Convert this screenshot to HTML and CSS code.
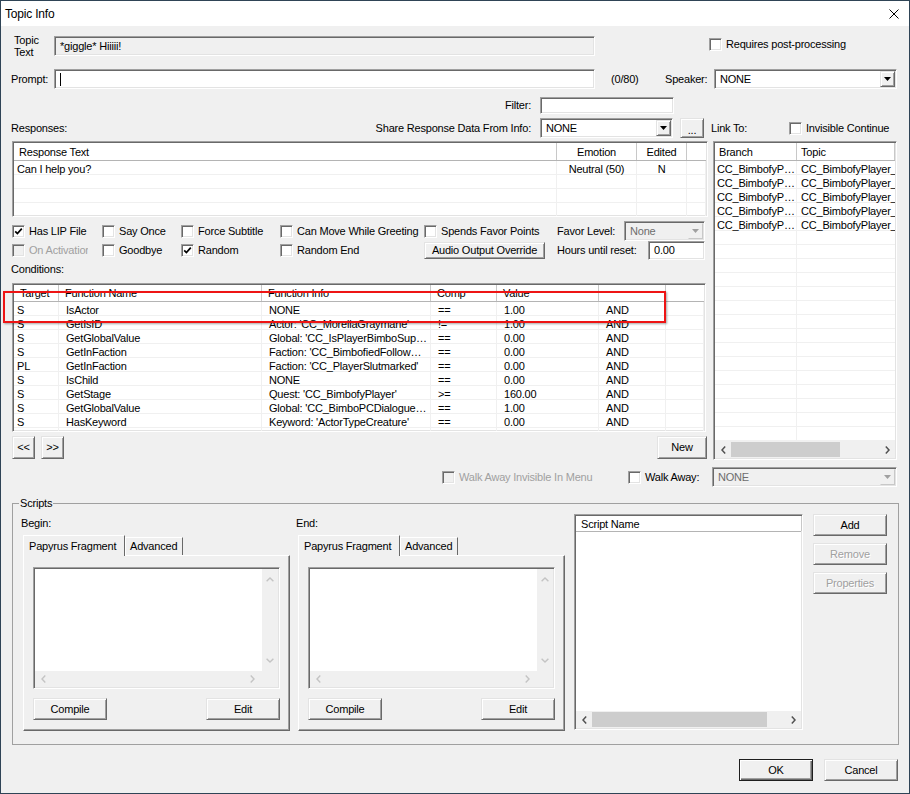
FILE: index.html
```html
<!DOCTYPE html>
<html lang="en">
<head>
    <meta charset="UTF-8">
    <meta name="viewport" content="width=device-width, initial-scale=1.0">
    <title>Topic Info</title>
    <link rel="stylesheet" href="styles.css">
</head>
<body>

<div class="window">
    <div class="titlebar">
        <span>Topic Info</span>
        <svg class="close" width="10" height="10" viewBox="0 0 10 10"><path d="M0.5 0.5L9.5 9.5M9.5 0.5L0.5 9.5" stroke="#000" stroke-width="1"/></svg>
    </div>

    <div class="dialog">
        <div class="row topic-row">
            <span class="lbl-topic">Topic<br>Text</span>
            <div class="field sunken disabled wide">*giggle* Hiiiii!</div>
            <span class="cb post"><span class="box"></span>Requires post-processing</span>
        </div>

        <div class="row prompt-row">
            <span class="lbl-prompt">Prompt:</span>
            <div class="field sunken wide"><span class="caret"></span></div>
            <span class="count">(0/80)</span>
            <span class="lbl-speaker">Speaker:</span>
            <div class="combo sunken speaker"><span class="combo-text">NONE</span><span class="drop"><i class="tri"></i></span></div>
        </div>

        <div class="main">
            <div class="left">
                <div class="row filter-row">
                    <span class="lbl-filter">Filter:</span>
                    <div class="field sunken filter"></div>
                </div>

                <div class="row resp-row">
                    <span class="lbl-resp">Responses:</span>
                    <span class="lbl-share">Share Response Data From Info:</span>
                    <div class="combo sunken share"><span class="combo-text">NONE</span><span class="drop"><i class="tri"></i></span></div>
                    <button class="btn dots">...</button>
                </div>

                <div class="list sunken responses">
                    <div class="lv-head">
                        <span class="c r1">Response Text</span>
                        <span class="c r2 center">Emotion</span>
                        <span class="c r3 center">Edited</span>
                        <span class="c fill"></span>
                    </div>
                    <div class="lv-row">
                        <span class="c r1">Can I help you?</span>
                        <span class="c r2 center">Neutral (50)</span>
                        <span class="c r3 center">N</span>
                        <span class="c fill"></span>
                    </div>
                    <div class="lv-row"><span class="c r1"></span><span class="c r2"></span><span class="c r3"></span><span class="c fill"></span></div>
                    <div class="lv-row"><span class="c r1"></span><span class="c r2"></span><span class="c r3"></span><span class="c fill"></span></div>
                    <div class="lv-row"><span class="c r1"></span><span class="c r2"></span><span class="c r3"></span><span class="c fill"></span></div>
                </div>

                <div class="opts">
                    <span class="cb"><span class="box"><svg width="9" height="9" viewBox="0 0 9 9"><path d="M1.2 4.3L3.4 6.6L7.8 1.6" fill="none" stroke="#000" stroke-width="1.7"/></svg></span>Has LIP File</span>
                    <span class="cb"><span class="box"></span>Say Once</span>
                    <span class="cb"><span class="box"></span>Force Subtitle</span>
                    <span class="cb"><span class="box"></span>Can Move While Greeting</span>
                    <span class="cb"><span class="box"></span>Spends Favor Points</span>
                    <div class="opt-end">
                        <span>Favor Level:</span>
                        <div class="combo sunken disabled favor"><span class="combo-text">None</span><span class="drop"><i class="tri"></i></span></div>
                    </div>

                    <span class="cb off"><span class="box"></span><span class="clip">On Activation</span></span>
                    <span class="cb"><span class="box"></span>Goodbye</span>
                    <span class="cb"><span class="box"><svg width="9" height="9" viewBox="0 0 9 9"><path d="M1.2 4.3L3.4 6.6L7.8 1.6" fill="none" stroke="#000" stroke-width="1.7"/></svg></span>Random</span>
                    <span class="cb"><span class="box"></span>Random End</span>
                    <button class="btn audio">Audio Output Override</button>
                    <div class="opt-end">
                        <span>Hours until reset:</span>
                        <div class="field sunken hours">0.00</div>
                    </div>
                </div>

                <div class="lbl-cond">Conditions:</div>

                <div class="list sunken conditions">
                    <div class="lv-head">
                        <span class="c k1">Target</span>
                        <span class="c k2">Function Name</span>
                        <span class="c k3">Function Info</span>
                        <span class="c k4">Comp</span>
                        <span class="c k5">Value</span>
                        <span class="c k6"></span>
                        <span class="c fill"></span>
                    </div>
                    <div class="lv-row"><span class="c k1">S</span><span class="c k2">IsActor</span><span class="c k3">NONE</span><span class="c k4">==</span><span class="c k5">1.00</span><span class="c k6">AND</span><span class="c fill"></span></div>
                    <div class="lv-row"><span class="c k1">S</span><span class="c k2">GetIsID</span><span class="c k3">Actor: 'CC_MorellaGraymane'</span><span class="c k4">!=</span><span class="c k5">1.00</span><span class="c k6">AND</span><span class="c fill"></span></div>
                    <div class="lv-row"><span class="c k1">S</span><span class="c k2">GetGlobalValue</span><span class="c k3">Global: 'CC_IsPlayerBimboSup…</span><span class="c k4">==</span><span class="c k5">0.00</span><span class="c k6">AND</span><span class="c fill"></span></div>
                    <div class="lv-row"><span class="c k1">S</span><span class="c k2">GetInFaction</span><span class="c k3">Faction: 'CC_BimbofiedFollow…</span><span class="c k4">==</span><span class="c k5">0.00</span><span class="c k6">AND</span><span class="c fill"></span></div>
                    <div class="lv-row"><span class="c k1">PL</span><span class="c k2">GetInFaction</span><span class="c k3">Faction: 'CC_PlayerSlutmarked'</span><span class="c k4">==</span><span class="c k5">0.00</span><span class="c k6">AND</span><span class="c fill"></span></div>
                    <div class="lv-row"><span class="c k1">S</span><span class="c k2">IsChild</span><span class="c k3">NONE</span><span class="c k4">==</span><span class="c k5">0.00</span><span class="c k6">AND</span><span class="c fill"></span></div>
                    <div class="lv-row"><span class="c k1">S</span><span class="c k2">GetStage</span><span class="c k3">Quest: 'CC_BimbofyPlayer'</span><span class="c k4">&gt;=</span><span class="c k5">160.00</span><span class="c k6">AND</span><span class="c fill"></span></div>
                    <div class="lv-row"><span class="c k1">S</span><span class="c k2">GetGlobalValue</span><span class="c k3">Global: 'CC_BimboPCDialogue…</span><span class="c k4">==</span><span class="c k5">1.00</span><span class="c k6">AND</span><span class="c fill"></span></div>
                    <div class="lv-row"><span class="c k1">S</span><span class="c k2">HasKeyword</span><span class="c k3">Keyword: 'ActorTypeCreature'</span><span class="c k4">==</span><span class="c k5">0.00</span><span class="c k6">AND</span><span class="c fill"></span></div>
                    <div class="lv-row"><span class="c k1"></span><span class="c k2"></span><span class="c k3"></span><span class="c k4"></span><span class="c k5"></span><span class="c k6"></span><span class="c fill"></span></div>
                </div>

                <div class="row nav-row">
                    <button class="btn nav">&lt;&lt;</button>
                    <button class="btn nav">&gt;&gt;</button>
                    <button class="btn new">New</button>
                </div>

                <div class="row walk-row">
                    <span class="cb off walk-menu"><span class="box"></span>Walk Away Invisible In Menu</span>
                    <span class="cb"><span class="box"></span>Walk Away:</span>
                </div>
            </div>

            <div class="right">
                <div class="row link-row">
                    <span class="lbl-link">Link To:</span>
                    <span class="cb"><span class="box"></span>Invisible Continue</span>
                </div>

                <div class="list sunken links">
                    <div class="lv-head">
                        <span class="c l1">Branch</span>
                        <span class="c l2">Topic</span>
                    </div>
                    <div class="lv-body">
                        <div class="lv-row"><span class="c l1">CC_BimbofyP…</span><span class="c l2">CC_BimbofyPlayer_Greet</span></div>
                        <div class="lv-row"><span class="c l1">CC_BimbofyP…</span><span class="c l2">CC_BimbofyPlayer_Greet</span></div>
                        <div class="lv-row"><span class="c l1">CC_BimbofyP…</span><span class="c l2">CC_BimbofyPlayer_Greet</span></div>
                        <div class="lv-row"><span class="c l1">CC_BimbofyP…</span><span class="c l2">CC_BimbofyPlayer_Intro</span></div>
                        <div class="lv-row"><span class="c l1">CC_BimbofyP…</span><span class="c l2">CC_BimbofyPlayer_Intro</span></div>
                        <div class="lv-row"><span class="c l1"></span><span class="c l2"></span></div>
                        <div class="lv-row"><span class="c l1"></span><span class="c l2"></span></div>
                        <div class="lv-row"><span class="c l1"></span><span class="c l2"></span></div>
                        <div class="lv-row"><span class="c l1"></span><span class="c l2"></span></div>
                        <div class="lv-row"><span class="c l1"></span><span class="c l2"></span></div>
                        <div class="lv-row"><span class="c l1"></span><span class="c l2"></span></div>
                        <div class="lv-row"><span class="c l1"></span><span class="c l2"></span></div>
                        <div class="lv-row"><span class="c l1"></span><span class="c l2"></span></div>
                        <div class="lv-row"><span class="c l1"></span><span class="c l2"></span></div>
                        <div class="lv-row"><span class="c l1"></span><span class="c l2"></span></div>
                        <div class="lv-row"><span class="c l1"></span><span class="c l2"></span></div>
                        <div class="lv-row"><span class="c l1"></span><span class="c l2"></span></div>
                        <div class="lv-row"><span class="c l1"></span><span class="c l2"></span></div>
                        <div class="lv-row"><span class="c l1"></span><span class="c l2"></span></div>
                        <div class="lv-row"><span class="c l1"></span><span class="c l2"></span></div>
                    </div>
                    <div class="hbar">
                        <span class="arrow"><svg width="5" height="8" viewBox="0 0 5 8"><path d="M4.2 0.6L1 4L4.2 7.4" fill="none" stroke="#505050" stroke-width="1.5"/></svg></span>
                        <span class="thumb link-thumb"></span>
                        <span class="track"></span>
                        <span class="arrow"><svg width="5" height="8" viewBox="0 0 5 8"><path d="M0.8 0.6L4 4L0.8 7.4" fill="none" stroke="#505050" stroke-width="1.5"/></svg></span>
                    </div>
                </div>

                <div class="combo sunken disabled walk-combo"><span class="combo-text">NONE</span><span class="drop"><i class="tri"></i></span></div>
            </div>
        </div>

        <fieldset class="scripts">
            <legend>Scripts</legend>
            <div class="scripts-body">
                <div class="frag">
                    <div class="frag-lbl">Begin:</div>
                    <div class="tabs"><span class="tab active">Papyrus Fragment</span><span class="tab">Advanced</span></div>
                    <div class="tab-panel">
                        <div class="edit sunken">
                            <div class="edit-area"></div>
                            <div class="vscroll">
                                <svg width="8" height="5" viewBox="0 0 8 5"><path d="M0.6 4.3L4 1L7.4 4.3" fill="none" stroke="#c4c4c4" stroke-width="1.4"/></svg>
                                <svg width="8" height="5" viewBox="0 0 8 5"><path d="M0.6 0.7L4 4L7.4 0.7" fill="none" stroke="#c4c4c4" stroke-width="1.4"/></svg>
                            </div>
                            <div class="hscroll">
                                <svg width="5" height="8" viewBox="0 0 5 8"><path d="M4.3 0.6L1 4L4.3 7.4" fill="none" stroke="#c4c4c4" stroke-width="1.4"/></svg>
                                <svg width="5" height="8" viewBox="0 0 5 8"><path d="M0.7 0.6L4 4L0.7 7.4" fill="none" stroke="#c4c4c4" stroke-width="1.4"/></svg>
                            </div>
                            <div class="corner"></div>
                        </div>
                        <div class="panel-btns"><button class="btn wide-btn">Compile</button><button class="btn wide-btn">Edit</button></div>
                    </div>
                </div>

                <div class="frag end">
                    <div class="frag-lbl">End:</div>
                    <div class="tabs"><span class="tab active">Papyrus Fragment</span><span class="tab">Advanced</span></div>
                    <div class="tab-panel">
                        <div class="edit sunken">
                            <div class="edit-area"></div>
                            <div class="vscroll">
                                <svg width="8" height="5" viewBox="0 0 8 5"><path d="M0.6 4.3L4 1L7.4 4.3" fill="none" stroke="#c4c4c4" stroke-width="1.4"/></svg>
                                <svg width="8" height="5" viewBox="0 0 8 5"><path d="M0.6 0.7L4 4L7.4 0.7" fill="none" stroke="#c4c4c4" stroke-width="1.4"/></svg>
                            </div>
                            <div class="hscroll">
                                <svg width="5" height="8" viewBox="0 0 5 8"><path d="M4.3 0.6L1 4L4.3 7.4" fill="none" stroke="#c4c4c4" stroke-width="1.4"/></svg>
                                <svg width="5" height="8" viewBox="0 0 5 8"><path d="M0.7 0.6L4 4L0.7 7.4" fill="none" stroke="#c4c4c4" stroke-width="1.4"/></svg>
                            </div>
                            <div class="corner"></div>
                        </div>
                        <div class="panel-btns"><button class="btn wide-btn">Compile</button><button class="btn wide-btn">Edit</button></div>
                    </div>
                </div>

                <div class="list sunken script-list">
                    <div class="lv-head script-head"><span class="c s1">Script Name</span></div>
                    <div class="lv-body"></div>
                    <div class="hbar">
                        <span class="arrow"><svg width="5" height="8" viewBox="0 0 5 8"><path d="M4.2 0.6L1 4L4.2 7.4" fill="none" stroke="#505050" stroke-width="1.5"/></svg></span>
                        <span class="thumb script-thumb"></span>
                        <span class="track"></span>
                        <span class="arrow"><svg width="5" height="8" viewBox="0 0 5 8"><path d="M0.8 0.6L4 4L0.8 7.4" fill="none" stroke="#505050" stroke-width="1.5"/></svg></span>
                    </div>
                </div>

                <div class="side-btns">
                    <button class="btn wide-btn">Add</button>
                    <button class="btn wide-btn off">Remove</button>
                    <button class="btn wide-btn off">Properties</button>
                </div>
            </div>
        </fieldset>

        <div class="footer">
            <button class="btn wide-btn default">OK</button>
            <button class="btn wide-btn">Cancel</button>
        </div>

        <div class="annot"></div>
    </div>
</div>

</body>
</html>
```

FILE: styles.css
```css
* {
    box-sizing: border-box;
}
body {
    margin: 0;
    background: #fff;
    font-family: "Liberation Sans", Arial, sans-serif;
    font-size: 11px;
    letter-spacing: -0.2px;
    color: #000;
}
.window {
    width: 910px;
    height: 794px;
    border: 1px solid #2f4456;
    background: #f0f0f0;
    overflow: hidden;
}
.titlebar {
    height: 25px;
    background: #fff;
    display: flex;
    align-items: center;
    justify-content: space-between;
    padding: 0 10px 0 4px;
    font-size: 12px;
}
.dialog {
    position: relative;
    padding-top: 7px;
    line-height: 13px;
}
.row {
    display: flex;
    align-items: center;
    white-space: nowrap;
}

/* 3d borders */
.sunken {
    border: 1px solid;
    border-color: #a0a0a0 #fff #fff #a0a0a0;
    box-shadow: inset 1px 1px #696969, inset -1px -1px #e3e3e3;
}
.btn {
    font: inherit;
    letter-spacing: inherit;
    color: #000;
    padding: 0;
    background: #f0f0f0;
    border: 1px solid;
    border-color: #e3e3e3 #696969 #696969 #e3e3e3;
    box-shadow: inset 1px 1px #fff, inset -1px -1px #a0a0a0;
    display: flex;
    align-items: center;
    justify-content: center;
}
.btn.off {
    color: #a0a0a0;
    text-shadow: 1px 1px #fff;
}
.btn.default {
    border-color: #1e1e1e;
    box-shadow: inset 1px 1px #fff, inset -1px -1px #696969, inset -2px -2px #a0a0a0;
}
.wide-btn {
    width: 74px;
    height: 22px;
}

/* inputs */
.field {
    height: 20px;
    padding: 0 5px;
    background: #fff;
    display: flex;
    align-items: center;
    white-space: nowrap;
    overflow: hidden;
}
.field.disabled {
    background: #f0f0f0;
}
.wide {
    width: 541px;
}
.caret {
    width: 1px;
    height: 13px;
    background: #000;
}
.combo {
    height: 20px;
    padding: 1px;
    background: #fff;
    display: flex;
}
.combo-text {
    flex: 1;
    padding-left: 4px;
    display: flex;
    align-items: center;
}
.drop {
    width: 15px;
    background: #f0f0f0;
    border: 1px solid;
    border-color: #e3e3e3 #696969 #696969 #e3e3e3;
    box-shadow: inset 1px 1px #fff, inset -1px -1px #a0a0a0;
    display: flex;
    align-items: center;
    justify-content: center;
}
.tri {
    width: 7px;
    height: 4px;
    background: #000;
    clip-path: polygon(0 0, 100% 0, 50% 100%);
}
.combo.disabled {
    background: #f0f0f0;
    color: #6d6d6d;
}
.combo.disabled .drop {
    border-color: #f0f0f0 #c8c8c8 #c8c8c8 #f0f0f0;
    box-shadow: none;
}
.combo.disabled .tri {
    background: #a0a0a0;
}

/* checkboxes */
.cb {
    display: flex;
    align-items: center;
    gap: 4px;
    white-space: nowrap;
}
.box {
    flex: none;
    width: 13px;
    height: 13px;
    background: #fff;
    border: 1px solid;
    border-color: #a0a0a0 #fff #fff #a0a0a0;
    box-shadow: inset 1px 1px #696969, inset -1px -1px #e3e3e3;
    display: flex;
    align-items: center;
    justify-content: center;
}
.cb.off {
    color: #a0a0a0;
}
.cb.off .box {
    background: #f0f0f0;
}
.clip {
    width: 59px;
    overflow: hidden;
}

/* top rows */
.topic-row {
    height: 26px;
}
.lbl-topic {
    margin-left: 13px;
    width: 40px;
    line-height: 12px;
}
.post {
    margin-left: 114px;
    align-self: flex-start;
    margin-top: 5px;
}
.prompt-row {
    height: 20px;
    margin-top: 10px;
}
.lbl-prompt {
    margin-left: 10px;
    width: 43px;
}
.count {
    margin-left: 16px;
    width: 54px;
}
.lbl-speaker {
    width: 49px;
}
.speaker {
    width: 183px;
}

/* main area */
.main {
    display: flex;
    margin-top: 8px;
}
.left {
    width: 709px;
    padding-left: 10px;
}
.right {
    width: 187px;
    padding-top: 21px;
}
.filter-row {
    height: 17px;
}
.lbl-filter {
    width: 520px;
    margin-right: 9px;
    text-align: right;
}
.filter {
    width: 134px;
    height: 17px;
}
.resp-row {
    height: 20px;
    margin-top: 4px;
}
.lbl-resp {
    width: 340px;
}
.lbl-share {
    width: 180px;
    margin-right: 9px;
    text-align: right;
}
.share {
    width: 133px;
}
.dots {
    width: 24px;
    height: 20px;
    margin-left: 7px;
    padding-top: 4px;
}

/* list views */
.list {
    background: #fff;
    padding: 1px;
    overflow: hidden;
    display: flex;
    flex-direction: column;
}
.lv-head {
    flex: none;
    display: flex;
    height: 18px;
    border-bottom: 1px solid #b4b4b4;
}
.lv-head .c {
    border-right: 1px solid #c8c8c8;
    padding-left: 6px;
    padding-top: 1px;
    line-height: 16px;
}
.lv-row {
    flex: none;
    display: flex;
    height: 14px;
    background: linear-gradient(#f0f0f0, #f0f0f0) left bottom / 100% 1px no-repeat;
}
.lv-row .c {
    height: 14px;
    padding-top: 2px;
    line-height: 12px;
    border-right: 1px solid #f0f0f0;
}
.c {
    flex: none;
    display: block;
    padding-left: 7px;
    white-space: nowrap;
    overflow: hidden;
    text-overflow: ellipsis;
}
.c.center {
    text-align: center;
    padding-left: 0;
}
.c.fill {
    flex: 1;
}
.lv-head .c.fill {
    border-right: none;
}
.lv-body {
    flex: 1;
    overflow: hidden;
}

.responses {
    margin-top: 3px;
    margin-left: 1px;
    width: 696px;
    height: 76px;
}
.responses .lv-head .r1 {
    padding-left: 5px;
}
.responses .lv-row .r1 {
    padding-left: 3px;
}
.r1 { width: 543px; }
.r2 { width: 80px; }
.r3 { width: 50px; }

.conditions {
    margin-top: 7px;
    margin-left: 1px;
    width: 694px;
    height: 149px;
}
.conditions .lv-head {
    height: 17px;
}
.conditions .lv-head .c {
    line-height: 15px;
}
.k1 { width: 45px; }
.k2 { width: 203px; }
.k3 { width: 169px; }
.k4 { width: 66px; }
.k5 { width: 102px; }
.k6 { width: 67px; }
.conditions .lv-row .k1 {
    padding-left: 3px;
}

.links {
    margin-top: 3px;
    margin-left: 3px;
    width: 184px;
    height: 319px;
}
.l1 { width: 82px; }
.l2 {
    flex: 1;
    text-overflow: clip;
}
.links .lv-head .c {
    padding-left: 4px;
}
.links .lv-row .l1 {
    padding-left: 2px;
}
.links .lv-row .l2 {
    padding-left: 4px;
    border-right: none;
}

.hbar {
    flex: none;
    height: 17px;
    background: #f0f0f0;
    display: flex;
    align-items: center;
}
.arrow {
    width: 16px;
    display: flex;
    justify-content: center;
}
.thumb {
    height: 15px;
    background: #cdcdcd;
}
.track {
    flex: 1;
}
.link-thumb {
    width: 109px;
}
.script-thumb {
    width: 175px;
}

/* option grid */
.opts {
    display: grid;
    grid-template-columns: 90px 79px 99px 144px 131px 1fr;
    grid-template-rows: 20px 19px;
    align-items: center;
    width: 694px;
    margin-top: 4px;
    margin-left: 1px;
}
.opt-end {
    display: flex;
    align-items: center;
    justify-content: space-between;
    padding-left: 2px;
    padding-right: 1px;
    white-space: nowrap;
}
.favor {
    width: 81px;
}
.hours {
    width: 57px;
    height: 19px;
}
.audio {
    width: 121px;
    height: 17px;
}
.lbl-cond {
    margin-top: 2px;
    height: 14px;
    line-height: 14px;
}

.nav-row {
    margin-top: 4px;
    margin-left: 1px;
    width: 695px;
    height: 23px;
}
.nav {
    width: 23px;
    height: 23px;
    margin-right: 6px;
}
.new {
    width: 50px;
    height: 23px;
    margin-left: auto;
}
.walk-row {
    margin-top: 8px;
    height: 20px;
}
.walk-menu {
    margin-left: 431px;
    width: 186px;
}

.link-row {
    height: 20px;
}
.lbl-link {
    margin-left: 1px;
    width: 78px;
}
.walk-combo {
    margin-top: 7px;
    margin-left: 2px;
    width: 185px;
}

/* scripts group */
.scripts {
    margin: 10px 0 0 11px;
    padding: 0;
    width: 887px;
    height: 248px;
    border: 1px solid #a0a0a0;
    min-inline-size: 0;
}
.scripts legend {
    margin-left: 6px;
    padding: 0 1px;
    line-height: 13px;
}
.scripts-body {
    display: flex;
    align-items: flex-start;
    margin-top: 4px;
    padding-left: 8px;
}
.frag {
    width: 269px;
    padding-top: 2px;
}
.frag.end {
    margin-left: 6px;
}
.frag-lbl {
    line-height: 14px;
}
.tabs {
    display: flex;
    align-items: flex-end;
    height: 20px;
    margin-top: 5px;
    margin-left: 2px;
    position: relative;
    z-index: 1;
    white-space: nowrap;
}
.tab {
    height: 18px;
    width: 58px;
    padding-left: 4px;
    background: #f0f0f0;
    border: 1px solid;
    border-bottom: none;
    border-color: #fff #696969 #fff #fff;
    display: flex;
    align-items: center;
}
.tab.active {
    width: 102px;
    height: 21px;
    margin-bottom: -1px;
    padding-left: 5px;
}
.tab-panel {
    margin-left: 2px;
    width: 267px;
    height: 176px;
    padding: 11px 9px 0;
    border: 1px solid;
    border-color: #fff #696969 #696969 #fff;
    box-shadow: inset -1px -1px #a0a0a0;
}
.edit {
    height: 122px;
    padding: 1px;
    background: #fff;
    display: grid;
    grid-template-columns: 1fr 16px;
    grid-template-rows: 1fr 16px;
}
.vscroll {
    background: #f0f0f0;
    display: flex;
    flex-direction: column;
    align-items: center;
    justify-content: space-between;
    padding: 8px 0 8px;
}
.hscroll {
    background: #f0f0f0;
    display: flex;
    align-items: center;
    justify-content: space-between;
    padding: 0 7px 0 6px;
}
.corner {
    background: #f0f0f0;
}
.panel-btns {
    display: flex;
    justify-content: space-between;
    margin-top: 9px;
}

.script-list {
    margin-left: 9px;
    width: 229px;
    height: 216px;
}
.script-head {
    height: 16px;
}
.script-head .s1 {
    width: 226px;
    padding-left: 5px;
    line-height: 14px;
}
.side-btns {
    margin-left: 10px;
    display: flex;
    flex-direction: column;
    gap: 7px;
}

.footer {
    display: flex;
    justify-content: flex-end;
    gap: 11px;
    margin-top: 14px;
    padding-right: 11px;
}

/* red annotation frame drawn over the conditions list */
.annot {
    position: absolute;
    left: 2px;
    top: 265px;
    width: 663px;
    height: 32px;
    border: 2px solid #ee1414;
    box-shadow: 1px 1px 2px rgba(0, 0, 0, 0.35);
}
```
